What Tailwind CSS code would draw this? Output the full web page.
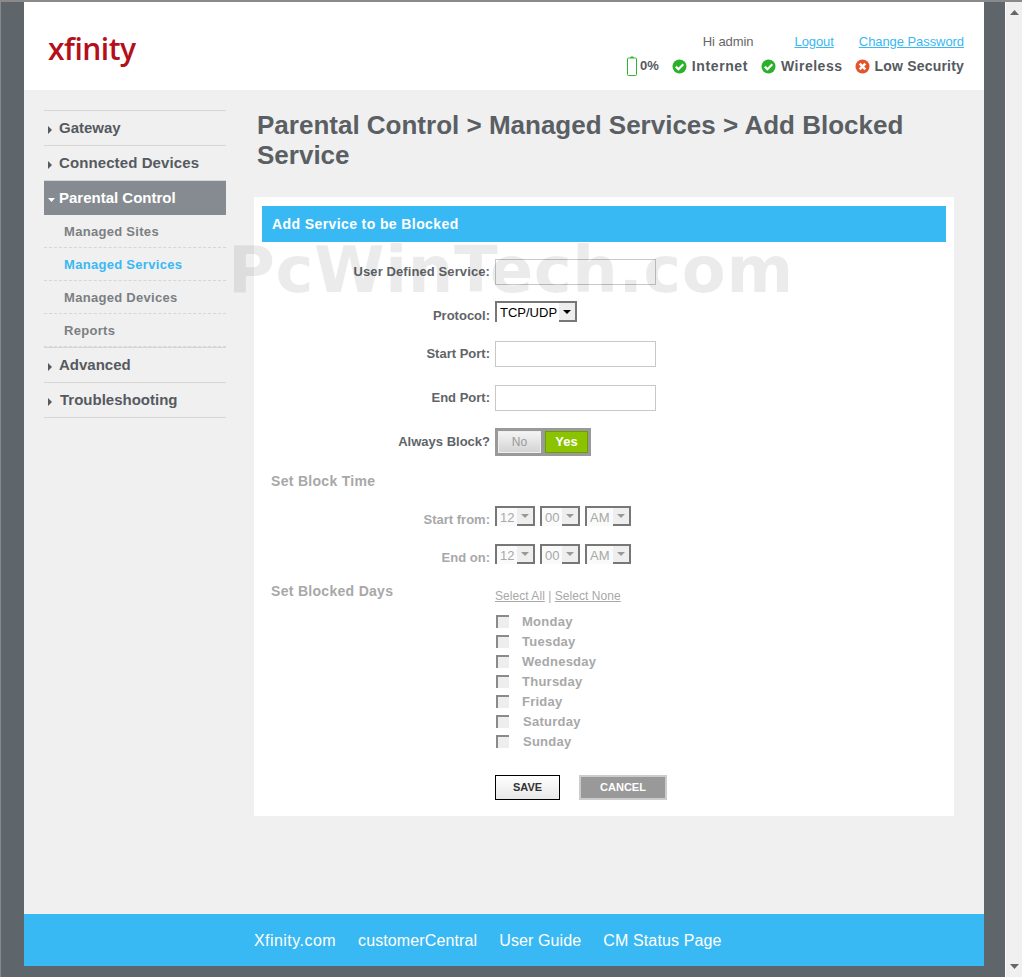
<!DOCTYPE html>
<html lang="en">
<head>
    <meta charset="UTF-8">
    <meta name="viewport" content="width=device-width, initial-scale=1.0">
    <title>Add Blocked Service</title>
    <script src="https://cdn.jsdelivr.net/npm/@tailwindcss/browser@4"></script>
</head>
<body class="h-screen overflow-hidden bg-[#5f666b] border-t-2 border-l border-t-[#8a8a8a] border-l-[#8a8a8a] flex font-['Liberation_Sans',Arial,sans-serif] text-[#555a5f]">

    <div class="relative ml-[23px] w-[960px] h-[964px] flex flex-col bg-[#f0f0f0] shrink-0">
        <!-- Header -->
        <header class="h-[88px] bg-white flex justify-between shrink-0">
            <div class="pl-[24px] pt-[25px] font-['Open_Sans',sans-serif] font-semibold text-[30px] leading-[44px] tracking-[-0.5px] text-[#b3101c]">xfinity</div>
            <div class="pr-[20px] pt-[32px] flex flex-col items-end">
                <div class="flex text-[13px] leading-[16px] tracking-[-0.07px]">
                    <span class="text-[#666]">Hi admin</span>
                    <a href="#" class="ml-[41px] text-[#3ab8f3] underline">Logout</a>
                    <a href="#" class="ml-[25px] text-[#3ab8f3] underline">Change Password</a>
                </div>
                <div class="mt-[6px] flex items-center text-[14px] font-bold leading-[20px]">
                    <svg width="10" height="20" viewBox="0 0 10 20" class="mr-[3px]"><path d="M3.5 0.5h3v1.5h-3z" fill="#2db52d"/><rect x="0.5" y="2" width="9" height="17.5" rx="1" fill="none" stroke="#2db52d"/></svg>
                    <span class="text-[13px]">0%</span>
                    <svg width="15" height="15" viewBox="0 0 15 15" class="ml-[13px] mr-[5px]"><circle cx="7.5" cy="7.5" r="7" fill="#2bb02b"/><path d="M3.8 7.6l2.6 2.6 4.9-5" fill="none" stroke="#fff" stroke-width="2.2"/></svg>
                    <span class="tracking-[0.6px]">Internet</span>
                    <svg width="15" height="15" viewBox="0 0 15 15" class="ml-[13px] mr-[5px]"><circle cx="7.5" cy="7.5" r="7" fill="#2bb02b"/><path d="M3.8 7.6l2.6 2.6 4.9-5" fill="none" stroke="#fff" stroke-width="2.2"/></svg>
                    <span class="tracking-[0.5px]">Wireless</span>
                    <svg width="15" height="15" viewBox="0 0 15 15" class="ml-[13px] mr-[4px]"><circle cx="7.5" cy="7.5" r="7" fill="#e4532a"/><path d="M4.7 4.7l5.6 5.6M10.3 4.7l-5.6 5.6" fill="none" stroke="#fff" stroke-width="2.4"/></svg>
                    <span class="tracking-[0.2px]">Low Security</span>
                </div>
            </div>
        </header>

        <div class="flex-1 flex">
            <!-- Sidebar -->
            <nav class="ml-[20px] mt-[20px] w-[182px] shrink-0 text-[15px] font-bold">
                <a href="#" class="h-[35px] flex items-center border-t border-[#d6d6d6]"><svg width="4" height="8" viewBox="0 0 4 8" class="ml-[4px] mr-[7px] mt-[3px]"><path d="M0 0l4 4-4 4z" fill="#555a5f"/></svg>Gateway</a>
                <a href="#" class="h-[35px] flex items-center border-t border-[#d6d6d6] tracking-[0.1px]"><svg width="4" height="8" viewBox="0 0 4 8" class="ml-[4px] mr-[7px] mt-[3px]"><path d="M0 0l4 4-4 4z" fill="#555a5f"/></svg>Connected Devices</a>
                <a href="#" class="h-[35px] flex items-center border-t border-[#d6d6d6] bg-[#858b90] text-white"><svg width="7" height="4" viewBox="0 0 7 4" class="ml-[4px] mr-[4px] mt-[3px]"><path d="M0 0h7l-3.5 4z" fill="#fff"/></svg>Parental Control</a>
                <a href="#" class="h-[33px] flex items-center pl-[20px] pt-[1px] text-[13px] tracking-[0.3px] text-[#7b7f83] border-b border-dashed border-[#d6d6d6]">Managed Sites</a>
                <a href="#" class="h-[33px] flex items-center pl-[20px] pt-[1px] text-[13px] tracking-[0.3px] text-[#3ab8f3] border-b border-dashed border-[#d6d6d6]">Managed Services</a>
                <a href="#" class="h-[33px] flex items-center pl-[20px] pt-[1px] text-[13px] tracking-[0.3px] text-[#7b7f83] border-b border-dashed border-[#d6d6d6]">Managed Devices</a>
                <a href="#" class="h-[33px] flex items-center pl-[20px] pt-[1px] text-[13px] tracking-[0.3px] text-[#7b7f83] border-b border-dashed border-[#d6d6d6]">Reports</a>
                <a href="#" class="h-[35px] flex items-center border-t border-[#d6d6d6]"><svg width="4" height="8" viewBox="0 0 4 8" class="ml-[4px] mr-[7px] mt-[3px]"><path d="M0 0l4 4-4 4z" fill="#555a5f"/></svg>Advanced</a>
                <a href="#" class="h-[36px] flex items-center border-y border-[#d6d6d6]"><svg width="4" height="8" viewBox="0 0 4 8" class="ml-[4px] mr-[8px] mt-[3px]"><path d="M0 0l4 4-4 4z" fill="#555a5f"/></svg>Troubleshooting</a>
            </nav>

            <!-- Main -->
            <main class="ml-[28px] flex-1 pt-[20px]">
                <h1 class="ml-[3px] w-[670px] text-[26px] leading-[30px] font-bold text-[#5a5f64]">Parental Control &gt; Managed Services &gt; Add Blocked Service</h1>

                <div class="mt-[27px] w-[700px] h-[619px] bg-white px-[8px] pt-[9px]">
                    <h2 class="h-[36px] pl-[10px] flex items-center bg-[#39b9f4] text-white text-[14px] font-bold tracking-[0.4px]">Add Service to be Blocked</h2>

                    <form class="text-[13px] font-bold text-[#5f6468]">
                        <div class="mt-[17px] h-[26px] flex items-center">
                            <label class="w-[228px] mr-[5px] text-right tracking-[0.1px]">User Defined Service:</label>
                            <input type="text" class="w-[161px] h-[26px] bg-white border border-[#c8c8c8]">
                        </div>
                        <div class="mt-[16px] h-[21px] flex items-center">
                            <label class="w-[228px] mr-[5px] mt-[9px] text-right">Protocol:</label>
                            <div class="relative w-[82px] h-[21px]">
                                <select class="appearance-none w-full h-full pl-[3px] pb-[1px] text-[13px] font-normal text-black bg-white border-t-2 border-l-2 border-[#777] rounded-none"><option>TCP/UDP</option></select>
                                <span class="absolute right-0 bottom-0 w-[18px] h-[19px] flex items-center justify-center bg-[#eee] border-r-2 border-b-2 border-[#777]"><svg width="8" height="4" viewBox="0 0 8 4"><path d="M0 0h8l-4 4z" fill="#000"/></svg></span>
                            </div>
                        </div>
                        <div class="mt-[19px] h-[26px] flex items-center">
                            <label class="w-[228px] mr-[5px] text-right">Start Port:</label>
                            <input type="text" class="w-[161px] h-[26px] bg-white border border-[#c8c8c8]">
                        </div>
                        <div class="mt-[18px] h-[26px] flex items-center">
                            <label class="w-[228px] mr-[5px] text-right">End Port:</label>
                            <input type="text" class="w-[161px] h-[26px] bg-white border border-[#c8c8c8]">
                        </div>
                        <div class="mt-[17px] h-[28px] flex items-center">
                            <label class="w-[228px] mr-[5px] text-right">Always Block?</label>
                            <div class="w-[96px] h-[28px] bg-[#999] p-[3px] flex justify-between">
                                <span class="w-[43px] flex items-center justify-center border border-[#eee] bg-gradient-to-b from-[#f4f4f4] to-[#d4d4d4] text-[#999] font-normal text-[12px]">No</span>
                                <span class="w-[43px] flex items-center justify-center border border-[#6f9e00] bg-[#8cc300] text-white text-[13px]">Yes</span>
                            </div>
                        </div>

                        <div class="text-[#a8a8a8]">
                            <h3 class="mt-[16px] ml-[9px] h-[18px] leading-[18px] text-[14px] tracking-[0.3px]">Set Block Time</h3>
                            <div class="mt-[16px] h-[20px] flex items-center">
                                <label class="w-[228px] mr-[5px] mt-[7px] text-right">Start from:</label>
                                <div class="flex gap-[5px]">
                                    <div class="relative w-[40px] h-[20px]"><select disabled class="appearance-none w-full h-full pl-[3px] pb-[3px] text-[13px] font-normal text-[#a8a8a8] bg-[#fafafa] border-t-2 border-l-2 border-[#777]"><option>12</option></select><span class="absolute right-0 bottom-0 w-[18px] h-[18px] flex items-center justify-center bg-[#eee] border-r-2 border-b-2 border-[#777]"><svg width="8" height="4" viewBox="0 0 8 4"><path d="M0 0h8l-4 4z" fill="#999"/></svg></span></div>
                                    <div class="relative w-[40px] h-[20px]"><select disabled class="appearance-none w-full h-full pl-[3px] pb-[3px] text-[13px] font-normal text-[#a8a8a8] bg-[#fafafa] border-t-2 border-l-2 border-[#777]"><option>00</option></select><span class="absolute right-0 bottom-0 w-[18px] h-[18px] flex items-center justify-center bg-[#eee] border-r-2 border-b-2 border-[#777]"><svg width="8" height="4" viewBox="0 0 8 4"><path d="M0 0h8l-4 4z" fill="#999"/></svg></span></div>
                                    <div class="relative w-[46px] h-[20px]"><select disabled class="appearance-none w-full h-full pl-[3px] pb-[3px] text-[13px] font-normal text-[#a8a8a8] bg-[#fafafa] border-t-2 border-l-2 border-[#777]"><option>AM</option></select><span class="absolute right-0 bottom-0 w-[18px] h-[18px] flex items-center justify-center bg-[#eee] border-r-2 border-b-2 border-[#777]"><svg width="8" height="4" viewBox="0 0 8 4"><path d="M0 0h8l-4 4z" fill="#999"/></svg></span></div>
                                </div>
                            </div>
                            <div class="mt-[18px] h-[20px] flex items-center">
                                <label class="w-[228px] mr-[5px] mt-[7px] text-right">End on:</label>
                                <div class="flex gap-[5px]">
                                    <div class="relative w-[40px] h-[20px]"><select disabled class="appearance-none w-full h-full pl-[3px] pb-[3px] text-[13px] font-normal text-[#a8a8a8] bg-[#fafafa] border-t-2 border-l-2 border-[#777]"><option>12</option></select><span class="absolute right-0 bottom-0 w-[18px] h-[18px] flex items-center justify-center bg-[#eee] border-r-2 border-b-2 border-[#777]"><svg width="8" height="4" viewBox="0 0 8 4"><path d="M0 0h8l-4 4z" fill="#999"/></svg></span></div>
                                    <div class="relative w-[40px] h-[20px]"><select disabled class="appearance-none w-full h-full pl-[3px] pb-[3px] text-[13px] font-normal text-[#a8a8a8] bg-[#fafafa] border-t-2 border-l-2 border-[#777]"><option>00</option></select><span class="absolute right-0 bottom-0 w-[18px] h-[18px] flex items-center justify-center bg-[#eee] border-r-2 border-b-2 border-[#777]"><svg width="8" height="4" viewBox="0 0 8 4"><path d="M0 0h8l-4 4z" fill="#999"/></svg></span></div>
                                    <div class="relative w-[46px] h-[20px]"><select disabled class="appearance-none w-full h-full pl-[3px] pb-[3px] text-[13px] font-normal text-[#a8a8a8] bg-[#fafafa] border-t-2 border-l-2 border-[#777]"><option>AM</option></select><span class="absolute right-0 bottom-0 w-[18px] h-[18px] flex items-center justify-center bg-[#eee] border-r-2 border-b-2 border-[#777]"><svg width="8" height="4" viewBox="0 0 8 4"><path d="M0 0h8l-4 4z" fill="#999"/></svg></span></div>
                                </div>
                            </div>

                            <div class="mt-[18px] flex">
                                <h3 class="ml-[9px] w-[224px] h-[18px] leading-[18px] text-[14px] tracking-[0.3px]">Set Blocked Days</h3>
                                <div>
                                    <div class="mt-[6px] h-[16px] leading-[16px] text-[12px] font-normal tracking-[0.05px]"><a href="#" class="underline">Select All</a> | <a href="#" class="underline">Select None</a></div>
                                    <ul class="mt-[8px] text-[13px] tracking-[0.25px]">
                                        <li class="h-[20px] flex items-center"><span class="ml-[1px] mb-[1px] w-[13px] h-[13px] bg-[#eee] border-t-2 border-l-2 border-t-[#8a8a8a] border-l-[#8a8a8a]"></span><span class="ml-[13px]">Monday</span></li>
                                        <li class="h-[20px] flex items-center"><span class="ml-[1px] mb-[1px] w-[13px] h-[13px] bg-[#eee] border-t-2 border-l-2 border-t-[#8a8a8a] border-l-[#8a8a8a]"></span><span class="ml-[13px]">Tuesday</span></li>
                                        <li class="h-[20px] flex items-center"><span class="ml-[1px] mb-[1px] w-[13px] h-[13px] bg-[#eee] border-t-2 border-l-2 border-t-[#8a8a8a] border-l-[#8a8a8a]"></span><span class="ml-[13px]">Wednesday</span></li>
                                        <li class="h-[20px] flex items-center"><span class="ml-[1px] mb-[1px] w-[13px] h-[13px] bg-[#eee] border-t-2 border-l-2 border-t-[#8a8a8a] border-l-[#8a8a8a]"></span><span class="ml-[13px]">Thursday</span></li>
                                        <li class="h-[20px] flex items-center"><span class="ml-[1px] mb-[1px] w-[13px] h-[13px] bg-[#eee] border-t-2 border-l-2 border-t-[#8a8a8a] border-l-[#8a8a8a]"></span><span class="ml-[13px]">Friday</span></li>
                                        <li class="h-[20px] flex items-center"><span class="ml-[1px] mb-[1px] w-[13px] h-[13px] bg-[#eee] border-t-2 border-l-2 border-t-[#8a8a8a] border-l-[#8a8a8a]"></span><span class="ml-[14px]">Saturday</span></li>
                                        <li class="h-[20px] flex items-center"><span class="ml-[1px] mb-[1px] w-[13px] h-[13px] bg-[#eee] border-t-2 border-l-2 border-t-[#8a8a8a] border-l-[#8a8a8a]"></span><span class="ml-[14px]">Sunday</span></li>
                                    </ul>
                                </div>
                            </div>
                        </div>

                        <div class="mt-[23px] ml-[233px] flex items-start text-[11px]">
                            <button type="button" class="w-[65px] h-[25px] border border-black bg-gradient-to-b from-white to-[#e8e8e8] text-[#333]">SAVE</button>
                            <button type="button" class="ml-[19px] w-[88px] h-[25px] border-2 border-[#ccc] bg-[#999] text-white">CANCEL</button>
                        </div>
                    </form>
                </div>
            </main>
        </div>

        <!-- Footer -->
        <footer class="h-[52px] shrink-0 bg-[#39b9f4] pl-[230px] pt-[1px] flex items-center gap-[22px] text-[16px] tracking-[0.12px] text-white">
            <a href="#" class="tracking-[0.45px]">Xfinity.com</a>
            <a href="#">customerCentral</a>
            <a href="#">User Guide</a>
            <a href="#">CM Status Page</a>
        </footer>

        <!-- Watermark -->
        <div class="absolute left-[204px] top-[231px] pointer-events-none font-['DejaVu_Sans',sans-serif] font-bold text-[64px] leading-[74px] tracking-[0.6px] text-black/8 whitespace-nowrap">PcWinTech.com</div>
    </div>

    <!-- Window scrollbar -->
    <div class="ml-[21px] w-[17px] h-full bg-[#f0f0f0] border-l border-[#fafafa] flex flex-col justify-between items-center py-[8px] shrink-0">
        <svg width="9" height="5" viewBox="0 0 9 5"><path d="M4.5 0l4.5 5H0z" fill="#666"/></svg>
        <svg width="9" height="5" viewBox="0 0 9 5"><path d="M0 0h9L4.5 5z" fill="#666"/></svg>
    </div>
</body>
</html>
